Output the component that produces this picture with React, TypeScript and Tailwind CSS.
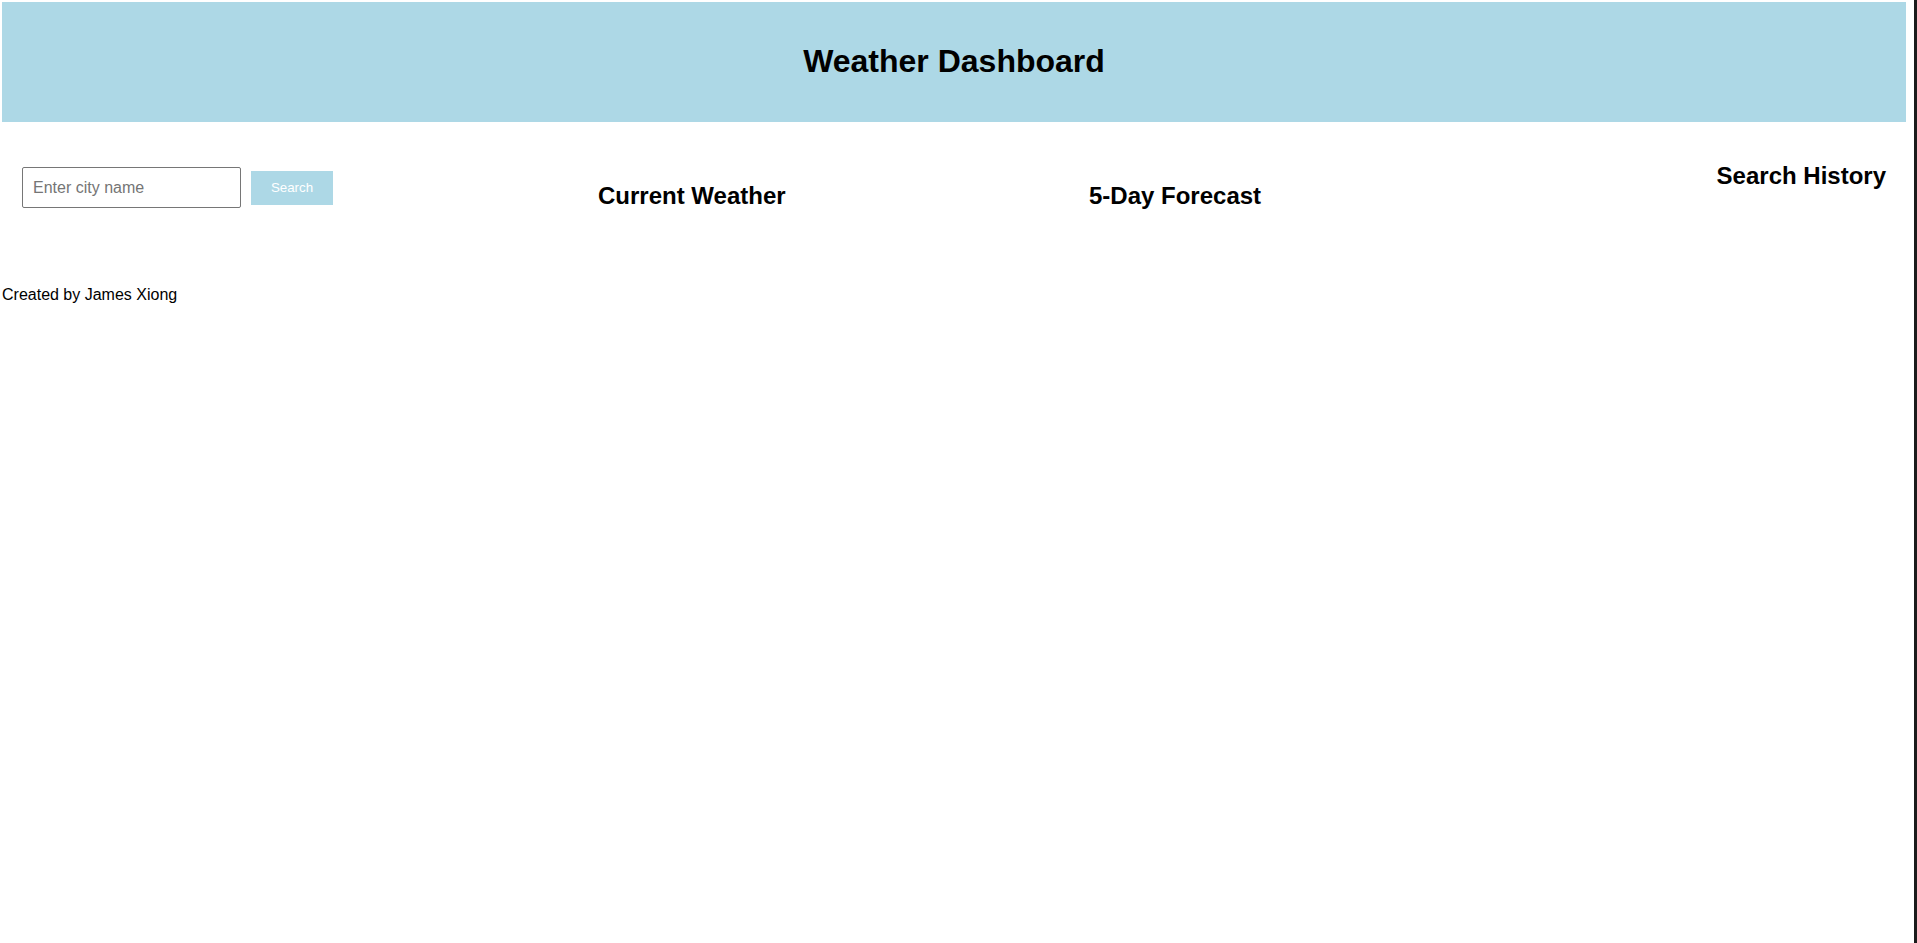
export default function App() {
  return (
    <div className="flex min-h-screen bg-white font-['Liberation_Sans',Arial,sans-serif] text-black">
      <div className="flex-1 pl-[2px] pr-[8px] pt-[2px]">
        <header className="flex h-[120px] items-center justify-center bg-[#add8e6] pb-[2px]">
          <h1 className="text-[32px] font-bold leading-[37px]">Weather Dashboard</h1>
        </header>

        <main className="flex items-start px-[20px]">
          <form
            className="mt-[45px] flex w-[576px] items-center gap-[10px]"
            onSubmit={(e) => e.preventDefault()}
          >
            <input
              type="text"
              placeholder="Enter city name"
              className="h-[41px] w-[219px] rounded-[2px] border border-[#767676] px-[10px] text-[16px] leading-[18px] text-black outline-none placeholder:text-[#757575]"
            />
            <button
              type="submit"
              className="h-[34px] w-[82px] bg-[#add8e6] text-[13.33px] leading-[15px] text-white"
            >
              Search
            </button>
          </form>

          <section className="mt-[60px] w-[491px]">
            <h2 className="text-[24px] font-bold leading-[28px]">Current Weather</h2>
          </section>

          <section className="mt-[60px] flex-1">
            <h2 className="text-[24px] font-bold leading-[28px]">5-Day Forecast</h2>
          </section>

          <aside className="mt-[40px] text-right">
            <h2 className="text-[24px] font-bold leading-[28px]">Search History</h2>
          </aside>
        </main>

        <footer className="mt-[76px] text-[16px] leading-[18px]">Created by James Xiong</footer>
      </div>
      <div className="w-[3px] bg-[#1b1b1b]" />
    </div>
  )
}
